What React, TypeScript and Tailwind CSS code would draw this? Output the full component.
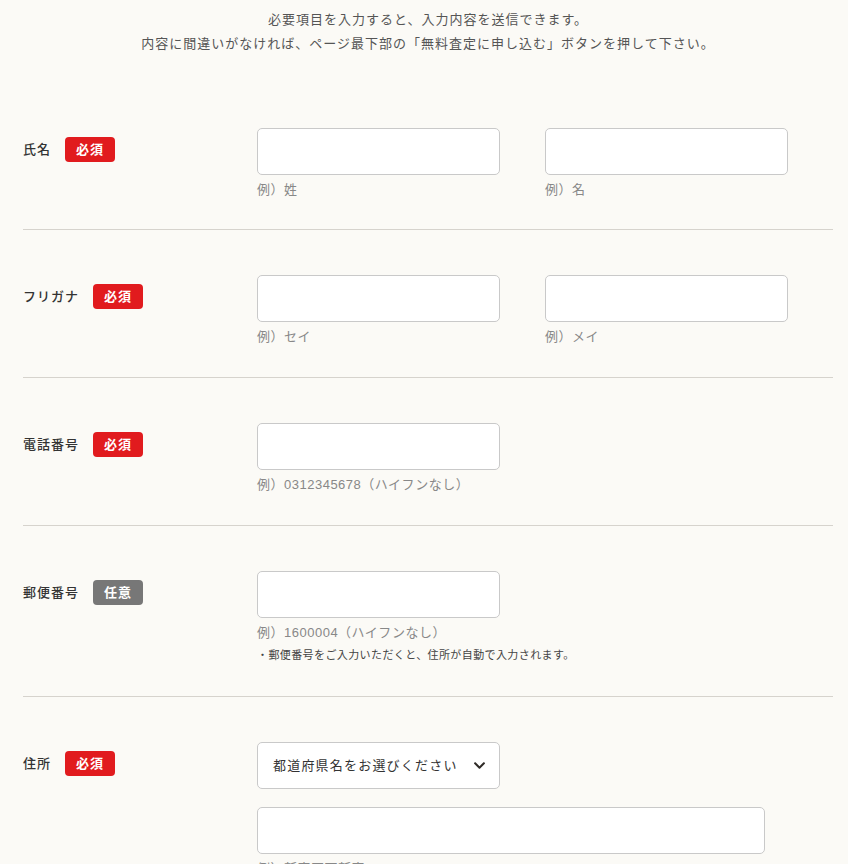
import { FaChevronDown } from "react-icons/fa";

const font = "font-['Liberation_Sans','Noto_Sans_CJK_JP',sans-serif]";

type Field = {
  label: string;
  required: boolean;
};

function Badge({ required }: { required: boolean }) {
  return (
    <span
      className={`flex h-[25px] w-[50px] items-center justify-center rounded-[4px] text-[13px] font-bold tracking-[1px] text-white ${
        required ? "bg-[#e11b1e]" : "bg-[#777777]"
      }`}
    >
      {required ? "必須" : "任意"}
    </span>
  );
}

function Label({ label, required }: Field) {
  return (
    <div className="mt-[9px] flex h-[25px] w-[234px] shrink-0 items-center gap-[14px]">
      <span className="text-[13px] font-medium tracking-[1px] text-[#333333]">{label}</span>
      <Badge required={required} />
    </div>
  );
}

function TextInput({ className = "w-[243px]" }: { className?: string }) {
  return (
    <input
      type="text"
      className={`block h-[47px] rounded-[5px] border border-[#c9c9c9] bg-white px-3 outline-none ${className}`}
    />
  );
}

function Hint({ children }: { children: React.ReactNode }) {
  return <p className="mt-[4px] h-[21px] text-[13px] leading-[21px] tracking-[0.5px] text-[#888888]">{children}</p>;
}

function Row({
  field,
  children,
  last = false,
  pb = "pb-[30px]",
}: {
  field: Field;
  children: React.ReactNode;
  last?: boolean;
  pb?: string;
}) {
  return (
    <div className={`flex pt-[45px] ${pb} ${last ? "" : "border-b border-[#d6d3cd]"}`}>
      <Label {...field} />
      <div className="flex-1">{children}</div>
    </div>
  );
}

export default function App() {
  return (
    <div className={`min-h-screen bg-[#fbfaf6] pl-[23px] pr-[15px] ${font}`}>
      <div className="pt-[8px] text-center text-[13px] leading-[24px] tracking-[1px] text-[#555555]">
        <p>必要項目を入力すると、入力内容を送信できます。</p>
        <p>内容に間違いがなければ、ページ最下部の「無料査定に申し込む」ボタンを押して下さい。</p>
      </div>

      <div className="mt-[27px]">
        <Row field={{ label: "氏名", required: true }} pb="pb-[29px]">
          <div className="flex gap-[45px]">
            <div>
              <TextInput />
              <Hint>例）姓</Hint>
            </div>
            <div>
              <TextInput />
              <Hint>例）名</Hint>
            </div>
          </div>
        </Row>

        <Row field={{ label: "フリガナ", required: true }}>
          <div className="flex gap-[45px]">
            <div>
              <TextInput />
              <Hint>例）セイ</Hint>
            </div>
            <div>
              <TextInput />
              <Hint>例）メイ</Hint>
            </div>
          </div>
        </Row>

        <Row field={{ label: "電話番号", required: true }}>
          <TextInput />
          <Hint>例）0312345678（ハイフンなし）</Hint>
        </Row>

        <Row field={{ label: "郵便番号", required: false }} pb="pb-[33px]">
          <TextInput />
          <Hint>例）1600004（ハイフンなし）</Hint>
          <p className="mt-[4px] text-[11px] leading-[16px] tracking-[0.4px] text-[#444444]">
            ・郵便番号をご入力いただくと、住所が自動で入力されます。
          </p>
        </Row>

        <Row field={{ label: "住所", required: true }} last>
          <div className="flex h-[47px] w-[243px] items-center justify-between rounded-[5px] border border-[#c9c9c9] bg-white pl-[15px] pr-[13px]">
            <span className="text-[13px] tracking-[1.2px] text-[#333333]">都道府県名をお選びください</span>
            <FaChevronDown className="h-[13px] w-[13px] text-[#2f2b27]" />
          </div>
          <div className="mt-[18px]">
            <TextInput className="w-[508px]" />
            <Hint>例）新宿区西新宿</Hint>
          </div>
        </Row>
      </div>
    </div>
  );
}
